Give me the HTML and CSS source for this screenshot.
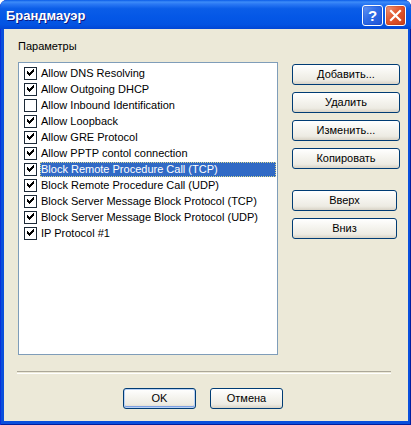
FILE: index.html
```html
<!DOCTYPE html>
<html>
<head>
<meta charset="utf-8">
<link rel="stylesheet" href="styles.css">
</head>
<body>
<div class="window">
  <div class="titlebar">
    <span class="title">Брандмауэр</span>
    <div class="tb-buttons">
      <span class="tb-btn help">?</span>
      <span class="tb-btn close"><svg width="21" height="21" viewBox="0 0 21 21"><path d="M6 6 L15 15 M15 6 L6 15" stroke="#fff" stroke-width="2.2" stroke-linecap="square"/></svg></span>
    </div>
  </div>
  <div class="frame">
    <div class="client">
      <div class="label">Параметры</div>
      <div class="main">
        <div class="list">
          <div class="row"><span class="cb on"></span><span class="txt">Allow DNS Resolving</span></div>
          <div class="row"><span class="cb on"></span><span class="txt">Allow Outgoing DHCP</span></div>
          <div class="row"><span class="cb"></span><span class="txt">Allow Inbound Identification</span></div>
          <div class="row"><span class="cb on"></span><span class="txt">Allow Loopback</span></div>
          <div class="row"><span class="cb on"></span><span class="txt">Allow GRE Protocol</span></div>
          <div class="row"><span class="cb on"></span><span class="txt">Allow PPTP contol connection</span></div>
          <div class="row"><span class="cb on"></span><span class="txt sel">Block Remote Procedure Call (TCP)</span></div>
          <div class="row"><span class="cb on"></span><span class="txt">Block Remote Procedure Call (UDP)</span></div>
          <div class="row"><span class="cb on"></span><span class="txt">Block Server Message Block Protocol (TCP)</span></div>
          <div class="row"><span class="cb on"></span><span class="txt">Block Server Message Block Protocol (UDP)</span></div>
          <div class="row"><span class="cb on"></span><span class="txt">IP Protocol #1</span></div>
        </div>
        <div class="side">
          <div class="btn wide">Добавить...</div>
          <div class="btn wide">Удалить</div>
          <div class="btn wide">Изменить...</div>
          <div class="btn wide">Копировать</div>
          <div class="btn narrow spaced">Вверх</div>
          <div class="btn narrow">Вниз</div>
        </div>
      </div>
      <div class="sep"></div>
      <div class="footer">
        <div class="btn dlg default">OK</div>
        <div class="btn dlg">Отмена</div>
      </div>
    </div>
  </div>
</div>
</body>
</html>
```
FILE: styles.css
```css
html, body { margin: 0; padding: 0; background: #ffffff; }
body { font-family: "Liberation Sans", Arial, sans-serif; font-size: 11px; color: #000; }
.window {
  width: 411px; height: 425px;
  display: flex; flex-direction: column;
  background: #0a4fdc;
  border-radius: 7px 7px 0 0;
  overflow: hidden;
  box-shadow: inset 1px 0 0 #0831d9, inset -1px 0 0 #001ea0, inset 0 -1px 0 #001ea0;
}
.titlebar {
  height: 29px; flex: none;
  display: flex; align-items: center; justify-content: space-between;
  background: linear-gradient(to bottom, #0a5ce8 0%, #3d8cf8 7%, #2a78f4 14%, #0a5de8 30%, #0457e6 60%, #0353e2 85%, #0246d4 100%);
  border-radius: 7px 7px 0 0;
  padding: 0 5px 0 6px;
  box-sizing: border-box;
}
.title {
  font-family: "Liberation Sans", Arial, sans-serif;
  font-weight: bold; font-size: 13px; color: #fff;
  text-shadow: 1px 1px 0 #0a1883;
  margin-top: 1px;
}
.tb-buttons { display: flex; gap: 2px; margin-top: 2px; }
.tb-btn {
  width: 21px; height: 21px; box-sizing: border-box;
  border: 1px solid #fff; border-radius: 3px;
  display: flex; align-items: center; justify-content: center;
  color: #fff; font-weight: bold; font-size: 15px;
}
.tb-btn svg { margin: -1px; }
.help { background: linear-gradient(135deg, #6a9af5 0%, #2f6ce6 45%, #1f54d8 100%); box-shadow: inset 0 0 2px #0a3cc0; }
.close { background: linear-gradient(135deg, #f2a083 0%, #e2572f 45%, #c8401c 100%); box-shadow: inset 0 0 2px #a02a10; }

.frame { flex: 1; display: flex; padding: 0 3px 4px 4px; }
.client { flex: 1; background: #ece9d8; display: flex; flex-direction: column; padding: 11px 0 0 14px; }
.label { line-height: 13px; height: 13px; margin-bottom: 9px; }
.main { display: flex; }
.list {
  width: 260px; height: 293px; box-sizing: border-box;
  border: 1px solid #7f9db9; background: #fff;
  padding-top: 2px;
}
.row { height: 16px; display: flex; align-items: center; }
.cb {
  width: 13px; height: 13px; box-sizing: border-box;
  border: 1px solid #1c2a38; background: #fff;
  margin-left: 5px; margin-right: 3px; flex: none;
  position: relative;
}
.cb.on::after {
  content: ""; position: absolute; left: 2px; top: 1px;
  width: 7px; height: 7px;
  background: no-repeat url("data:image/svg+xml;utf8,<svg xmlns='http://www.w3.org/2000/svg' width='7' height='7' viewBox='0 0 7 7'><path d='M0 2h1v1h1v1h1v-1h1v-1h1v-1h1v-1h1v3h-1v1h-1v1h-1v1h-1v1h-1v-1h-1v-1h-1z' fill='%23000'/></svg>");
}
.txt { line-height: 15px; height: 15px; padding: 0 2px 0 1px; white-space: nowrap; box-sizing: border-box; }
.txt.sel { flex: 1; margin-right: 1px; background: #316ac5; color: #fff; outline: 1px dotted #d8d890; outline-offset: -1px; }

.side { display: flex; flex-direction: column; margin-left: 14px; padding-top: 2px; gap: 7px; }
.btn {
  height: 21px; box-sizing: border-box;
  border: 1px solid #003c74; border-radius: 3px;
  background: linear-gradient(to bottom, #ffffff 0%, #f6f5f0 40%, #edebe3 80%, #d8d3c6 100%);
  display: flex; align-items: center; justify-content: center;
  line-height: 13px;
}
.wide { width: 108px; }
.narrow { width: 105px; }
.spaced { margin-top: 14px; }
.sep { margin: 16px 17px 0 -1px; height: 1px; border-top: 1px solid #aca899; border-bottom: 1px solid #fff; }
.footer { display: flex; justify-content: center; gap: 14px; margin-top: 14px; margin-left: -14px; padding-right: 6px; }
.dlg { width: 73px; }
.default { box-shadow: inset 0 0 0 1px #b9d1f4, inset 0 -1px 0 1px #7ea0e2; }
```
